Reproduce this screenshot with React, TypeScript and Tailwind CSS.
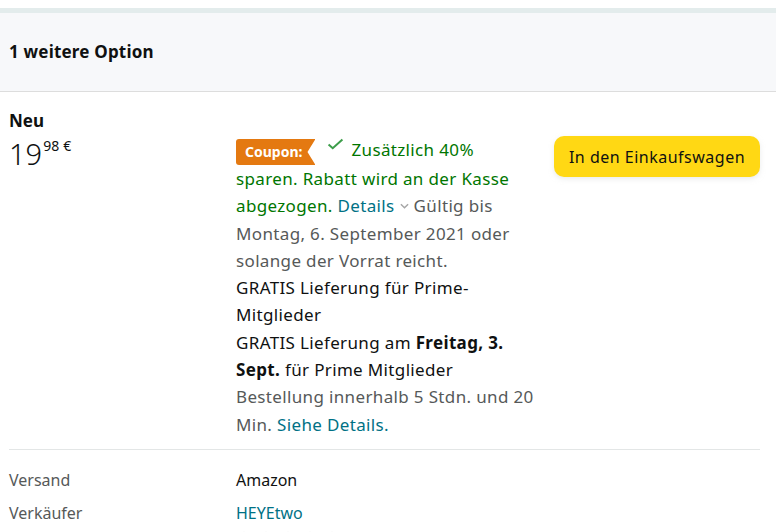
import React from "react";

function Check() {
  return (
    <svg viewBox="0 0 18 13" className="inline-block w-[17px] h-[12px] align-[6px] mr-[7px] ml-[12px]">
      <path d="M1.5 7 L6 11 L16.5 1.5" fill="none" stroke="#3d9d4a" strokeWidth="2.2" />
    </svg>
  );
}

function Chevron() {
  return (
    <svg viewBox="0 0 10 6" className="inline-block w-[9px] h-[6px] align-[3px] mx-[5px]">
      <path d="M1 1 L5 5 L9 1" fill="none" stroke="#a6a6a6" strokeWidth="1.6" />
    </svg>
  );
}

function Stars() {
  return (
    <div className="flex gap-[6px]">
      {[0, 1, 2, 3, 4].map((i) => (
        <svg key={i} viewBox="0 0 20 20" className="w-[16px] h-[16px]">
          <path
            d="M10 1.5 L12.6 7.2 L18.6 7.6 L14 11.6 L15.4 17.8 L10 14.6 L4.6 17.8 L6 11.6 L1.4 7.6 L7.4 7.2 Z"
            fill="#e6e6e6"
          />
        </svg>
      ))}
    </div>
  );
}

export default function App() {
  return (
    <div className="min-h-screen bg-white font-['Noto_Sans',sans-serif] text-[#0f1111]">
      <div className="h-2 bg-white" />
      <div className="h-[5px] bg-[#e3ecec]" />
      <div className="h-[79px] bg-[#f7f8fa] border-b border-[#dddddd] px-[9px] flex items-center">
        <span className="text-[17px] font-bold tracking-[0.2px]">1 weitere Option</span>
      </div>

      <div className="pl-[9px] pr-4 pt-[17px]">
        <div className="text-[17px] font-bold leading-6">Neu</div>

        <div className="flex mt-[3px]">
          {/* price */}
          <div className="w-[227px] shrink-0 flex items-start pt-[3px]">
            <span className="text-[29px] leading-[29px] font-light">19</span>
            <span className="text-[14px] leading-none ml-[1px]">98</span>
            <span className="text-[14px] leading-none ml-[4px]">€</span>
          </div>

          {/* details */}
          <div className="w-[302px] shrink-0 text-[17px] leading-[27.3px] tracking-[0.35px]">
            <div>
              <span className="inline-block align-[-1px] h-[26px] leading-[26px] tracking-normal bg-[#e47911] text-white text-[14px] font-bold pl-[9px] pr-[13px] rounded-l-[3px] [clip-path:polygon(0_0,100%_0,calc(100%-8px)_50%,100%_100%,0_100%)]">
                Coupon:
              </span>
              <Check />
              <span className="text-[#007600]">
                Zusätzlich 40% sparen. Rabatt wird an der Kasse abgezogen.
              </span>{" "}
              <span className="text-[#007185]">Details</span>
              <Chevron />
              <span className="text-[#565959]">
                Gültig bis Montag, 6. September 2021 oder solange der Vorrat reicht.
              </span>
            </div>
            <div>GRATIS Lieferung für Prime-Mitglieder</div>
            <div>
              GRATIS Lieferung am <span className="font-bold">Freitag, 3. Sept.</span> für Prime Mitglieder
            </div>
            <div className="text-[#565959]">
              Bestellung innerhalb 5 Stdn. und 20 Min.{" "}
              <span className="text-[#007185]">Siehe Details.</span>
            </div>
          </div>

          {/* button */}
          <div className="ml-4 flex-1">
            <button className="w-full h-[41px] rounded-[10px] bg-[#ffd814] text-[16px] tracking-[0.5px] text-[#0f1111] shadow-[0_2px_5px_rgba(213,217,217,0.5)]">
              In den Einkaufswagen
            </button>
          </div>
        </div>

        <div className="mt-[11px] border-t border-[#e3e6e6]" />

        <div className="pt-[14px] text-[16px]">
          <div className="flex h-[33px] items-center">
            <span className="w-[227px] text-[#565959]">Versand</span>
            <span>Amazon</span>
          </div>
          <div className="flex h-[33px] items-center">
            <span className="w-[227px] text-[#565959]">Verkäufer</span>
            <span className="text-[#007185]">HEYEtwo</span>
          </div>
          <div className="pl-[227px]">
            <Stars />
          </div>
        </div>
      </div>
    </div>
  );
}
